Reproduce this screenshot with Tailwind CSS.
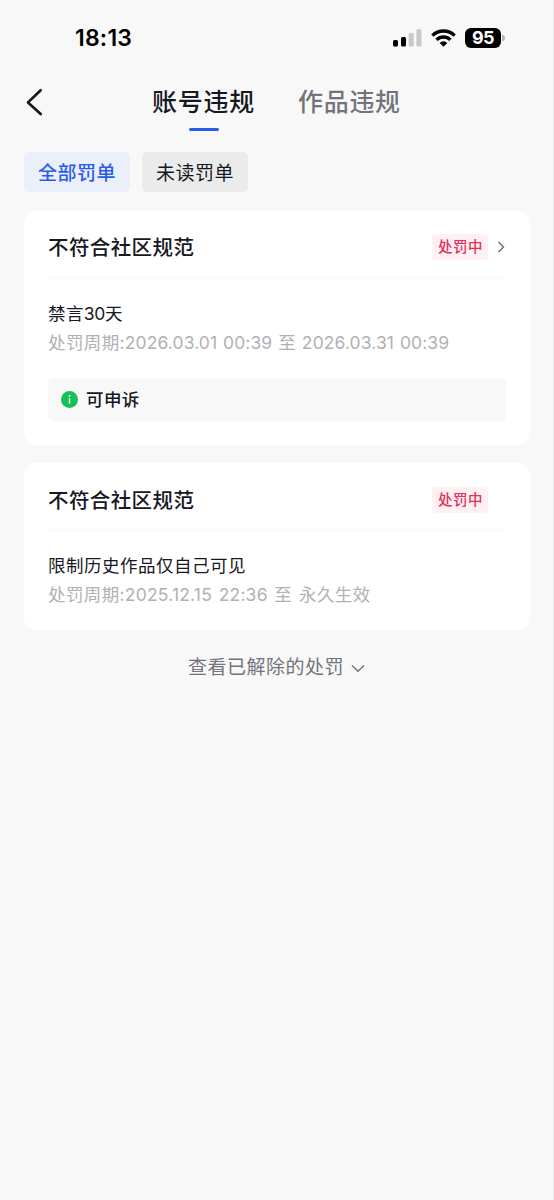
<!DOCTYPE html>
<html lang="zh-CN">
<head>
<meta charset="utf-8">
<title>账号违规</title>
<script src="https://cdn.jsdelivr.net/npm/@tailwindcss/browser@4"></script>
</head>
<body class="w-[554px] h-[1200px] overflow-hidden bg-[#f8f8f8] border-r border-[#ebebec] font-['Inter','Noto_Sans_CJK_SC',sans-serif] text-[#161823] whitespace-nowrap">
  <div class="h-[76px] flex items-center justify-between pl-[75px] pr-[48px]">
    <div class="text-[23px] tracking-[0.2px] leading-[28px] font-semibold text-black">18:13</div>
    <div class="flex items-center">
      <svg class="w-[29px] h-[18px]" viewBox="0 0 29 18">
        <rect x="0" y="11" width="5" height="6.5" rx="1.5" fill="#000"/>
        <rect x="8" y="8" width="5" height="9.500" rx="1.500" fill="#000"/>
        <rect x="15.700" y="4" width="5" height="13.500" rx="1.500" fill="#c9c9ca"/>
        <rect x="23.400" y="0" width="5" height="17.500" rx="1.500" fill="#c9c9ca"/>
      </svg>
      <svg class="ml-[9px] w-[25px] h-[18px]" viewBox="0 0 25 18" fill="none" stroke="#000" stroke-width="3.400">
        <path d="M1.400 6.600A15.800 15.800 0 0 1 23.600 6.600"/>
        <path d="M5.500 10.800A10 10 0 0 1 19.500 10.800"/>
        <path d="M12.500 17.700 8.700 13.900a5.400 5.400 0 0 1 7.600 0Z" fill="#000" stroke="none"/>
      </svg>
      <div class="ml-[9px] w-[36px] h-[20px] rounded-[6px] bg-black text-white text-[18px] tracking-[-0.5px] leading-[20px] font-bold text-center">95</div>
      <svg class="ml-[1px] w-[3px] h-[8px]" viewBox="0 0 3 8"><path d="M0 0.500Q3 1.500 3 4T0 7.500Z" fill="#b5b5b6"/></svg>
    </div>
  </div>

  <div class="h-[76px] flex items-start">
    <svg class="ml-[25px] mt-[11px] w-[20px] h-[30px]" viewBox="0 0 20 30" fill="none" stroke="#161823" stroke-width="2.700" stroke-linecap="round" stroke-linejoin="round"><path d="M15.700 3.200 3 15.400 15.700 27"/></svg>
    <div class="ml-[107px] w-[103px] flex flex-col items-center">
      <div class="h-[52px] leading-[53px] text-[25px] tracking-[0.7px] font-medium">账号违规</div>
      <div class="w-[30px] h-[3px] rounded-full bg-[#2a5ceb]"></div>
    </div>
    <div class="ml-[43px] h-[52px] leading-[53px] text-[25px] tracking-[0.7px] font-medium text-[#73747b]">作品违规</div>
  </div>

  <div class="flex gap-[12px] pl-[24px] text-[19px] tracking-[0.5px] leading-[43px]">
    <div class="w-[106px] h-[40px] rounded-[5px] bg-[#eaeff9] pl-[14px] text-[#2a5ceb] font-medium">全部罚单</div>
    <div class="w-[106px] h-[40px] rounded-[5px] bg-[#ebebec] pl-[14px]">未读罚单</div>
  </div>

  <section class="mt-[19px] ml-[24px] w-[506px] h-[234px] rounded-[12px] bg-white px-[24px]">
    <div class="h-[67px] border-b border-[#f8f8f8] pt-[6px] flex items-center">
      <h2 class="flex-1 pt-[2px] text-[20.5px] tracking-[0.4px] leading-[30px] font-medium">不符合社区规范</h2>
      <div class="w-[56px] h-[26px] rounded-[4px] bg-[#fff0f3] pl-[6px] text-[14.5px] tracking-[0.5px] leading-[26px] font-medium text-[#e5305d]">处罚中</div>
      <svg class="ml-[8px] w-[10px] h-[14px]" viewBox="0 0 10 14" fill="none" stroke="#6b6c74" stroke-width="1.400"><path d="M2.500 2 7.500 7 2.500 12"/></svg>
    </div>
    <div class="mt-[21px] text-[17.5px] tracking-[0.4px] leading-[29px]">禁言<span class="tracking-[-0.4px]">30</span>天</div>
    <div class="text-[17.5px] tracking-[0.4px] leading-[29px] text-[#b0b1b5]">处罚周期<span class="tracking-[0.1px] [word-spacing:0.8px]">:2026.03.01 00:39 </span>至<span class="tracking-[0.1px] [word-spacing:0.8px]"> 2026.03.31 00:39</span></div>
    <div class="mt-[21px] h-[43px] rounded-[5px] bg-[#f8f8f8] pl-[13px] flex items-center">
      <svg class="w-[17px] h-[17px]" viewBox="0 0 17 17"><circle cx="8.500" cy="8.500" r="8.500" fill="#17bf5b"/><circle cx="8.500" cy="5" r="1" fill="#fff"/><path d="M8.500 7.200v5.300" stroke="#fff" stroke-width="1.500"/></svg>
      <div class="ml-[8px] text-[17.5px] tracking-[0.4px] leading-[28px] font-medium">可申诉</div>
    </div>
  </section>

  <section class="mt-[18px] ml-[24px] w-[506px] h-[167px] rounded-[12px] bg-white px-[24px]">
    <div class="h-[68px] border-b border-[#f8f8f8] pt-[7px] flex items-center">
      <h2 class="flex-1 pt-[2px] text-[20.5px] tracking-[0.4px] leading-[30px] font-medium">不符合社区规范</h2>
      <div class="mr-[18px] w-[56px] h-[26px] rounded-[4px] bg-[#fff0f3] pl-[6px] text-[14.5px] tracking-[0.5px] leading-[26px] font-medium text-[#e5305d]">处罚中</div>
    </div>
    <div class="mt-[20px] text-[17.5px] tracking-[0.5px] leading-[29px]">限制历史作品仅自己可见</div>
    <div class="text-[17.5px] tracking-[0.4px] leading-[29px] text-[#b0b1b5]">处罚周期<span class="tracking-[0.2px] [word-spacing:1.5px]">:2025.12.15 22:36 </span>至<span class="[word-spacing:1.5px]"> </span>永久生效</div>
  </section>

  <div class="mt-[23px] pl-[188px] flex items-center text-[19px] tracking-[0.5px] leading-[30px] text-[#73747b]">
    <span>查看已解除的处罚</span>
    <svg class="ml-[7px] w-[14px] h-[10px]" viewBox="0 0 14 10" fill="none" stroke="#73747b" stroke-width="1.400"><path d="M1 2.500 7 8.300 13 2.500"/></svg>
  </div>
</body>
</html>
